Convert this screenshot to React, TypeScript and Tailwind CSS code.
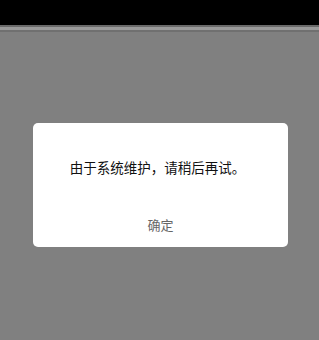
export default function App() {
  return (
    <div className="w-[319px] h-[340px] bg-[#808080] flex flex-col overflow-hidden" style={{ fontFamily: '"Noto Sans CJK SC", "Liberation Sans", sans-serif' }}>
      <div className="h-[25px] bg-black shrink-0" />
      <div className="h-[2px] bg-[#6a6a6a] shrink-0" />
      <div className="h-[3px] bg-[#9a9a9a] shrink-0" />
      <div className="h-[2px] bg-[#707070] shrink-0" />
      <div className="mt-[91px] ml-[33px] w-[255px] h-[124px] bg-white rounded-[5px] flex flex-col items-center">
        <div className="mt-[35px] mr-[6px] text-[13.5px] leading-[18px] text-[#111]">由于系统维护，请稍后再试。</div>
        <div className="mt-[40px] text-[13px] leading-[18px] text-[#666]">确定</div>
      </div>
    </div>
  );
}
